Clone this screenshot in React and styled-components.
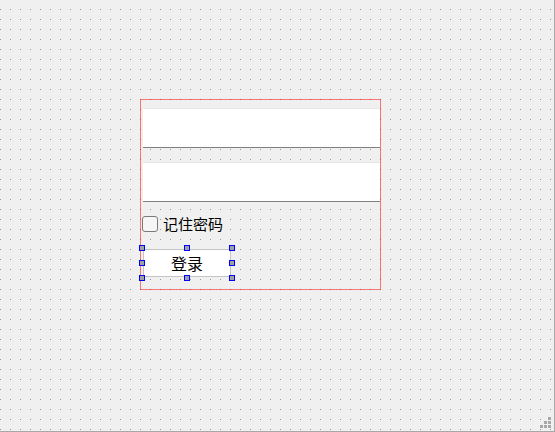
import React from "react";
import styled, { createGlobalStyle } from "styled-components";

const Global = createGlobalStyle`
  html, body { margin: 0; padding: 0; background: #f0f0f0; }
  body { font-family: "Noto Sans CJK SC", "Noto Sans", sans-serif; }
`;

const Canvas = styled.div`
  position: relative;
  width: 555px;
  height: 432px;
  overflow: hidden;
  background-color: #f0f0f0;
  background-image: conic-gradient(from 270deg at 1px 1px, #959595 90deg, transparent 0);
  background-size: 10px 10px;
  background-position: 0 9px;
  box-sizing: border-box;
  border-right: 1px solid #a8a8a8;
  border-bottom: 1px solid #a8a8a8;
`;

const Form = styled.div`
  position: absolute;
  left: 140px;
  top: 99px;
  width: 241px;
  height: 191px;
  box-sizing: border-box;
  border: 1px solid rgba(255, 0, 0, 0.5);
  padding: 8px 0 0 1px;
  display: flex;
  flex-direction: column;
`;

const LineEdit = styled.div`
  height: 40px;
  margin-left: 1px;
  margin-top: ${(p) => p.$mt || 0}px;
  box-sizing: border-box;
  background: #ffffff;
  border-top: 1px solid #e6e6e6;
  border-bottom: 1px solid #7f7f7f;
`;

const CheckRow = styled.label`
  margin-top: 14px;
  height: 16px;
  display: flex;
  align-items: center;
  gap: 5px;
  font-size: 15px;
  color: #000;
  line-height: 16px;
`;

const Box = styled.span`
  width: 16px;
  height: 16px;
  box-sizing: border-box;
  border: 1px solid #7a7a7a;
  border-radius: 3px;
  background: #f6f6f6;
  flex: none;
`;

const ButtonWrap = styled.div`
  position: relative;
  margin-top: 17px;
  margin-left: 1px;
  width: 88px;
  height: 28px;
`;

const Button = styled.div`
  width: 100%;
  height: 100%;
  box-sizing: border-box;
  background: #ffffff;
  border: 1px solid #c4c4c4;
  display: flex;
  align-items: center;
  justify-content: center;
  font-size: 16px;
  color: #000;
`;

const Handle = styled.span`
  position: absolute;
  width: 6px;
  height: 6px;
  box-sizing: border-box;
  background: #a0a0a0;
  border: 1px solid #0000ff;
  left: ${(p) => p.$x}px;
  top: ${(p) => p.$y}px;
`;

const Grip = styled.div`
  position: absolute;
  right: 3px;
  bottom: 3px;
  display: grid;
  grid-template-columns: repeat(3, 3px);
  grid-template-rows: repeat(3, 3px);
  gap: 1px;
`;

const GripDot = styled.span`
  background: ${(p) => (p.$on ? "#a8a8a8" : "transparent")};
`;

const hx = [-4, 41, 86];
const hy = [-4, 11, 26];

export default function App() {
  const grip = [0, 0, 1, 0, 1, 1, 1, 1, 1];
  return (
    <>
      <Global />
      <Canvas>
        <Form>
          <LineEdit />
          <LineEdit $mt={14} />
          <CheckRow>
            <Box />
            <span>记住密码</span>
          </CheckRow>
          <ButtonWrap>
            <Button>登录</Button>
            {hy.map((y, j) =>
              hx.map((x, i) =>
                i === 1 && j === 1 ? null : <Handle key={`${i}-${j}`} $x={x} $y={y} />
              )
            )}
          </ButtonWrap>
        </Form>
        <Grip>
          {grip.map((g, i) => (
            <GripDot key={i} $on={g} />
          ))}
        </Grip>
      </Canvas>
    </>
  );
}
